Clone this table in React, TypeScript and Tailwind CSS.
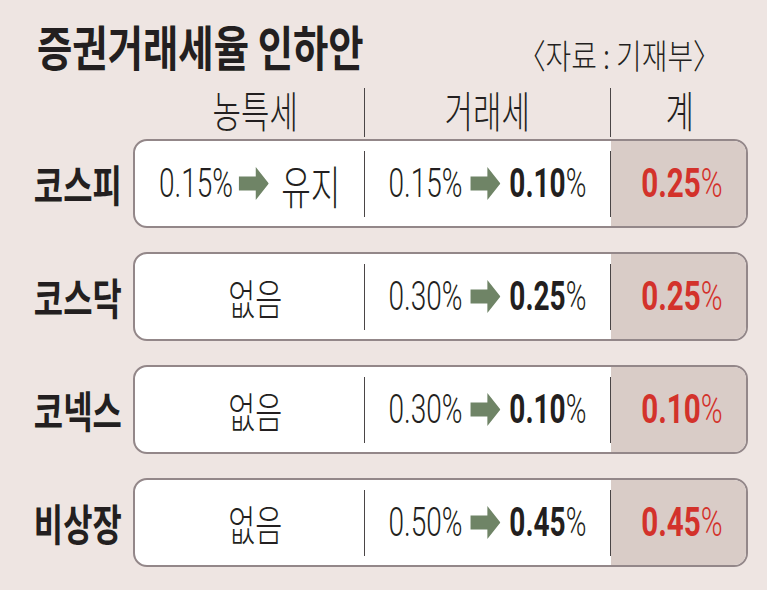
import React from "react";

/* ---------------- COLORS ---------------- */
const COLORS = {
  bg: "#eee5e2",
  ink: "#231f20",
  border: "#938789",
  tint: "#d9ccc7",
  red: "#d3322b",
  arrow: "#6f8466",
};

/* ---------------- TYPES ---------------- */
interface Row {
  name: string;
  nongteuk: { from: string; to: string } | null;
  trade: { from: string; to: string };
  total: string;
}

const ROWS: Row[] = [
  { name: "코스피", nongteuk: { from: "0.15", to: "유지" }, trade: { from: "0.15", to: "0.10" }, total: "0.25" },
  { name: "코스닥", nongteuk: null, trade: { from: "0.30", to: "0.25" }, total: "0.25" },
  { name: "코넥스", nongteuk: null, trade: { from: "0.30", to: "0.10" }, total: "0.10" },
  { name: "비상장", nongteuk: null, trade: { from: "0.50", to: "0.45" }, total: "0.45" },
];

/* ---------------- PIECES ---------------- */
// arrow is drawn inside a span squeezed to 0.7, so it is pre-widened
const Arrow: React.FC<{ className?: string }> = ({ className }) => (
  <svg
    viewBox="0 0 30 33"
    width={43}
    height={33}
    preserveAspectRatio="none"
    className={className}
  >
    <path d="M0 9.5H17V0L30 16.5L17 33V23.5H0Z" fill={COLORS.arrow} />
  </svg>
);

const Num: React.FC<{ value: string; bold?: boolean }> = ({ value, bold }) => (
  <span>
    <span className={bold ? "font-bold" : "font-light"}>{value}</span>
    <span className="font-light">%</span>
  </span>
);

const Divider = () => <div className="w-px h-[66px] self-center bg-[#4a4546]" />;

/* ---------------- COMPONENT ---------------- */
export default function App() {
  return (
    <div
      className="w-[767px] h-[590px] overflow-hidden text-[#231f20] font-['Roboto','Noto_Sans_CJK_KR',sans-serif]"
      style={{ backgroundColor: COLORS.bg }}
    >
      {/* Title */}
      <div className="flex justify-between pt-[17px] pl-[37px] pr-[46px] h-[76px]">
        <h1 className="h-[56px] leading-[56px] text-[48px] font-bold font-['Noto_Sans_CJK_KR',sans-serif] whitespace-nowrap origin-left scale-x-[0.8]">
          증권거래세율 인하안
        </h1>
        <span className="self-end mb-[4px] leading-[34px] text-[34px] font-light font-['Noto_Sans_CJK_KR',sans-serif] whitespace-nowrap origin-right scale-x-[0.82]">
          〈자료 : 기재부〉
        </span>
      </div>

      {/* Header */}
      <div className="grid grid-cols-[133px_231px_246px_138px] mt-[12px] h-[42px] leading-none font-['Noto_Sans_CJK_KR',sans-serif] font-light text-[43px]">
        <div />
        <div className="flex items-center justify-center pl-[14px] pb-[6px]">
          <span className="scale-x-[0.72] whitespace-nowrap">농특세</span>
        </div>
        <div className="flex items-center justify-center border-l border-[#4a4546] pb-[6px]">
          <span className="scale-x-[0.72] whitespace-nowrap">거래세</span>
        </div>
        <div className="flex items-center justify-center border-l border-[#4a4546] pb-[6px]">
          <span className="scale-x-[0.72] whitespace-nowrap">계</span>
        </div>
      </div>

      {/* Rows */}
      <div className="flex flex-col gap-[24px] mt-[9px]">
        {ROWS.map((r) => (
          <div key={r.name} className="flex h-[89px]">
            <div className="w-[133px] pr-[11px] flex items-center justify-end">
              <span className="text-[43px] leading-none font-bold font-['Noto_Sans_CJK_KR',sans-serif] origin-right scale-x-[0.74] whitespace-nowrap">
                {r.name}
              </span>
            </div>

            <div
              className="w-[615px] rounded-[14px] border-2 overflow-hidden bg-white flex text-[40px] leading-none"
              style={{ borderColor: COLORS.border }}
            >
              {/* 농특세 */}
              <div className="w-[229px] flex items-center justify-center">
                <span className="flex items-center whitespace-nowrap scale-x-[0.7]">
                  {r.nongteuk ? (
                    <>
                      <Num value={r.nongteuk.from} />
                      <Arrow className="ml-[8px] mr-[18px]" />
                      <span className="font-light font-['Noto_Sans_CJK_KR',sans-serif] text-[46px]">
                        {r.nongteuk.to}
                      </span>
                    </>
                  ) : (
                    <span className="ml-[16px] font-light font-['Noto_Sans_CJK_KR',sans-serif] text-[42px]">
                      없음
                    </span>
                  )}
                </span>
              </div>

              <Divider />

              {/* 거래세 */}
              <div className="w-[245px] flex items-center justify-center">
                <span className="flex items-center whitespace-nowrap scale-x-[0.7]">
                  <Num value={r.trade.from} />
                  <Arrow className="ml-[11px] mr-[13px]" />
                  <Num value={r.trade.to} bold />
                </span>
              </div>

              <Divider />

              {/* 계 */}
              <div
                className="flex-1 flex items-center justify-center pl-[8px]"
                style={{ backgroundColor: COLORS.tint, color: COLORS.red }}
              >
                <span className="whitespace-nowrap scale-x-[0.74]">
                  <Num value={r.total} bold />
                </span>
              </div>
            </div>
          </div>
        ))}
      </div>
    </div>
  );
}
